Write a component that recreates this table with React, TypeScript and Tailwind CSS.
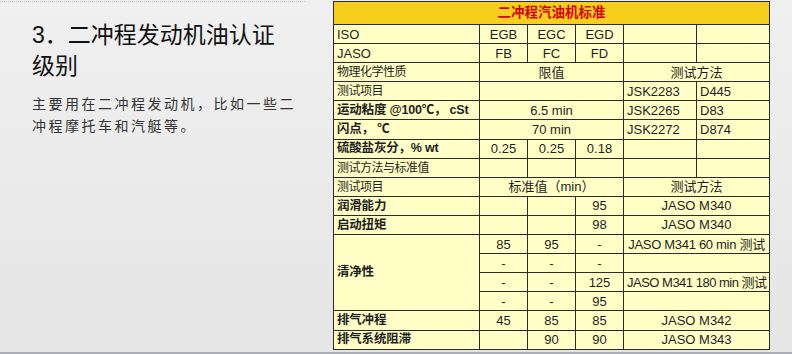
const cjk = { fontFamily: '"Liberation Sans", "Noto Sans CJK SC", sans-serif' }

const cell = 'border border-[#2b2b2b] px-[3px] py-0 leading-none whitespace-nowrap overflow-hidden'
const lbl = `${cell} text-left text-[12px] tracking-[-0.5px]`
const bold = `${cell} text-left text-[12.5px] tracking-[-0.2px] font-bold`
const val = `${cell} text-center text-[13px]`
const left = `${cell} text-left text-[13px]`

export default function App() {
  return (
    <div
      className="w-[792px] h-[354px] flex flex-col bg-gradient-to-b from-[#f0f0f0] to-[#e5e5e5] text-[#1e1e1e]"
      style={cjk}
    >
      <div className="flex flex-1">
        <div className="w-[333px] shrink-0">
          <div className="w-[305px] mt-[1px] border-t border-dotted border-[#c8c8c8]" />
          <h1 className="mt-[18px] pl-[32px] w-[290px] text-[23px] leading-[31px] text-[#111] font-normal">
            3．二冲程发动机油认证级别
          </h1>
          <p className="mt-[11px] pl-[32px] w-[305px] text-[14px] leading-[22px] tracking-[2.5px] text-[#333]">
            主要用在二冲程发动机，比如一些二冲程摩托车和汽艇等。
          </p>
        </div>
        <div className="pt-[1px]">
          <table className="table-fixed border-collapse w-[436px] bg-[#ffffc6]">
            <colgroup>
              <col className="w-[146px]" />
              <col className="w-[48px]" />
              <col className="w-[48px]" />
              <col className="w-[48px]" />
              <col className="w-[73px]" />
              <col className="w-[73px]" />
            </colgroup>
            <tbody>
              <tr className="h-[23px] bg-[#f6cf1d]">
                <td colSpan={6} className={`${cell} text-center text-[13.5px] font-bold text-[#d90000]`}>
                  二冲程汽油机标准
                </td>
              </tr>
              <tr className="h-[19.1px]">
                <td className={left}>ISO</td>
                <td className={val}>EGB</td>
                <td className={val}>EGC</td>
                <td className={val}>EGD</td>
                <td className={cell} />
                <td className={cell} />
              </tr>
              <tr className="h-[19.1px]">
                <td className={left}>JASO</td>
                <td className={val}>FB</td>
                <td className={val}>FC</td>
                <td className={val}>FD</td>
                <td className={cell} />
                <td className={cell} />
              </tr>
              <tr className="h-[19.1px]">
                <td className={lbl}>物理化学性质</td>
                <td colSpan={3} className={`${val} text-[12px]`}>限值</td>
                <td colSpan={2} className={`${val} text-[12px]`}>测试方法</td>
              </tr>
              <tr className="h-[19.1px]">
                <td className={lbl}>测试项目</td>
                <td colSpan={3} className={cell} />
                <td className={left}>JSK2283</td>
                <td className={left}>D445</td>
              </tr>
              <tr className="h-[19.1px]">
                <td className={bold}>运动粘度 @100℃， cSt</td>
                <td colSpan={3} className={val}>6.5 min</td>
                <td className={left}>JSK2265</td>
                <td className={left}>D83</td>
              </tr>
              <tr className="h-[19.1px]">
                <td className={bold}>闪点， ℃</td>
                <td colSpan={3} className={val}>70 min</td>
                <td className={left}>JSK2272</td>
                <td className={left}>D874</td>
              </tr>
              <tr className="h-[19.1px]">
                <td className={bold}>硫酸盐灰分，% wt</td>
                <td className={val}>0.25</td>
                <td className={val}>0.25</td>
                <td className={val}>0.18</td>
                <td className={cell} />
                <td className={cell} />
              </tr>
              <tr className="h-[19.1px]">
                <td className={lbl}>测试方法与标准值</td>
                <td className={cell} />
                <td className={cell} />
                <td className={cell} />
                <td className={cell} />
                <td className={cell} />
              </tr>
              <tr className="h-[19.1px]">
                <td className={lbl}>测试项目</td>
                <td colSpan={3} className={`${val} text-[12px]`}>标准值（min）</td>
                <td colSpan={2} className={`${val} text-[12px]`}>测试方法</td>
              </tr>
              <tr className="h-[19.1px]">
                <td className={bold}>润滑能力</td>
                <td className={cell} />
                <td className={cell} />
                <td className={val}>95</td>
                <td colSpan={2} className={val}>JASO M340</td>
              </tr>
              <tr className="h-[19.1px]">
                <td className={bold}>启动扭矩</td>
                <td className={cell} />
                <td className={cell} />
                <td className={val}>98</td>
                <td colSpan={2} className={val}>JASO M340</td>
              </tr>
              <tr className="h-[19.1px]">
                <td rowSpan={4} className={bold}>清净性</td>
                <td className={val}>85</td>
                <td className={val}>95</td>
                <td className={val}>-</td>
                <td colSpan={2} className={`${val} tracking-[-0.3px]`}>JASO M341 60 min 测试</td>
              </tr>
              <tr className="h-[19.1px]">
                <td className={val}>-</td>
                <td className={val}>-</td>
                <td className={val}>-</td>
                <td colSpan={2} className={cell} />
              </tr>
              <tr className="h-[19.1px]">
                <td className={val}>-</td>
                <td className={val}>-</td>
                <td className={val}>125</td>
                <td colSpan={2} className={`${val} px-0 tracking-[-0.5px]`}>JASO M341 180 min 测试</td>
              </tr>
              <tr className="h-[19.1px]">
                <td className={val}>-</td>
                <td className={val}>-</td>
                <td className={val}>95</td>
                <td colSpan={2} className={cell} />
              </tr>
              <tr className="h-[19.1px]">
                <td className={bold}>排气冲程</td>
                <td className={val}>45</td>
                <td className={val}>85</td>
                <td className={val}>85</td>
                <td colSpan={2} className={val}>JASO M342</td>
              </tr>
              <tr className="h-[19.1px]">
                <td className={bold}>排气系统阻滞</td>
                <td className={cell} />
                <td className={val}>90</td>
                <td className={val}>90</td>
                <td colSpan={2} className={val}>JASO M343</td>
              </tr>
            </tbody>
          </table>
        </div>
      </div>
      <div className="h-[2px] bg-[#abaeb8]" />
    </div>
  )
}
